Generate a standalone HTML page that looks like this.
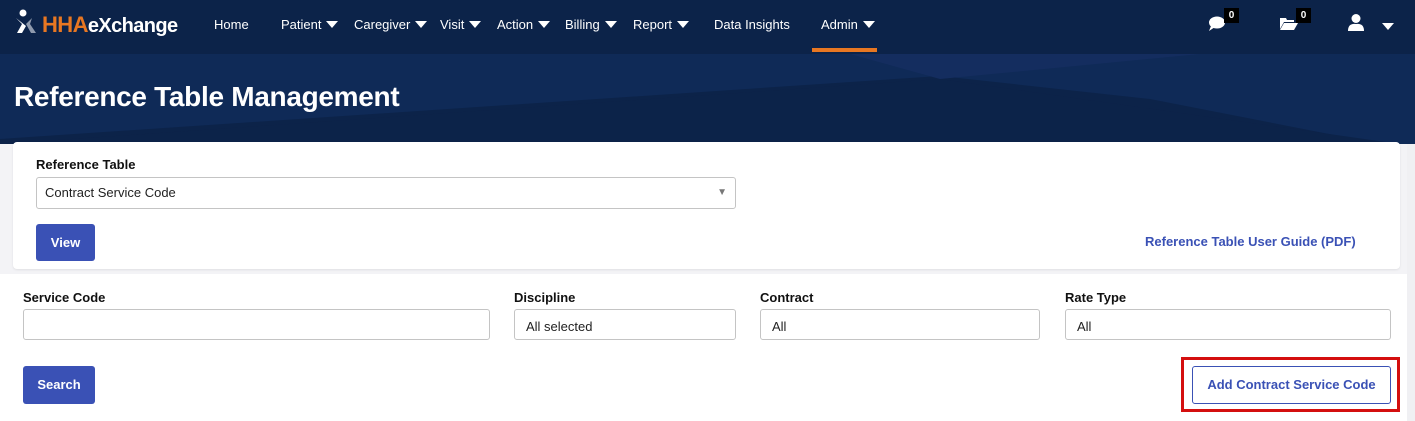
<!DOCTYPE html>
<html><head><meta charset="utf-8"><style>
*{margin:0;padding:0;box-sizing:border-box}
body{width:1415px;height:421px;overflow:hidden;font-family:"Liberation Sans",Arial,sans-serif;background:#fff;position:relative}
.nav{position:absolute;left:0;top:0;width:1415px;height:54px;background:#0c2349}
.hdr{position:absolute;left:0;top:54px;width:1415px;height:90px;background:#0c2349;overflow:hidden}
.a{position:absolute;color:#fff;font-size:13px;top:17px;white-space:nowrap}
.car{display:inline-block;width:0;height:0;border-left:6px solid transparent;border-right:6px solid transparent;border-top:7px solid #fff;margin-left:5px;vertical-align:1px}
.lbl{position:absolute;font-size:13px;font-weight:bold;color:#111}
.inp{position:absolute;border:1px solid #c4c4c4;border-radius:3px;background:#fff;font-size:13px;color:#222;padding-left:11px;line-height:33px}
.btn{position:absolute;background:#3a51b5;color:#fff;font-weight:bold;font-size:13px;border-radius:3px;text-align:center}
.badge{position:absolute;background:#000;color:#fff;font-size:10px;font-weight:bold;width:15px;height:15px;text-align:center;line-height:15px;top:8px}
</style></head><body>
<div class="nav"></div>
<div class="hdr">
<svg width="1415" height="90" style="position:absolute;left:0;top:0">
<polygon points="0,0 1415,0 1415,90 1380,90 1150,45 940,22 0,85" fill="#0f2a57"/>
<polygon points="850,0 1200,0 940,25" fill="#142d5f"/>
<polygon points="0,90 940,25 1400,90" fill="#0c2349"/>
</svg>
<div style="position:absolute;left:14px;top:27px;color:#fff;font-size:28px;font-weight:bold;letter-spacing:-0.3px">Reference Table Management</div>
</div>
<svg style="position:absolute;left:14px;top:9px" width="24" height="26" viewBox="0 0 24 26">
<circle cx="9" cy="4" r="3.5" fill="#fff"/>
<path d="M2 9 L8 15 L3 24 L8 24 L12 17 Z" fill="#fff"/>
<path d="M18 9 L12 15 L17 24 L22 24 L16 15 Z" fill="#8f9aad"/>
</svg>
<div style="position:absolute;left:42px;top:12px;font-size:22px;font-weight:bold;letter-spacing:-0.6px"><span style="color:#e87722">HHA</span><span style="color:#fff;font-size:20px">eXchange</span></div>
<div class="a" style="left:214px">Home</div>
<div class="a" style="left:281px">Patient<span class="car"></span></div>
<div class="a" style="left:354px">Caregiver<span class="car"></span></div>
<div class="a" style="left:440px">Visit<span class="car"></span></div>
<div class="a" style="left:497px">Action<span class="car"></span></div>
<div class="a" style="left:565px">Billing<span class="car"></span></div>
<div class="a" style="left:633px">Report<span class="car"></span></div>
<div class="a" style="left:714px">Data Insights</div>
<div class="a" style="left:821px">Admin<span class="car"></span></div>
<div style="position:absolute;left:812px;top:48px;width:65px;height:4px;background:#e87722"></div>
<svg style="position:absolute;left:1208px;top:16px" width="18" height="15" viewBox="0 0 18 15"><ellipse cx="9" cy="6.5" rx="8" ry="6" fill="#fff"/><path d="M3 10 L1 15 L7 11 Z" fill="#fff"/></svg>
<div class="badge" style="left:1224px">0</div>
<svg style="position:absolute;left:1280px;top:17px" width="18" height="13" viewBox="0 0 18 13"><path d="M0 1 L6 1 L7 3 L14 3 L14 5 L4 5 L0 12 Z" fill="#fff"/><path d="M4 6 L18 6 L14 13 L0 13 Z" fill="#fff"/></svg>
<div class="badge" style="left:1296px">0</div>
<svg style="position:absolute;left:1348px;top:14px" width="16" height="17" viewBox="0 0 16 17"><circle cx="8" cy="4.5" r="4.5" fill="#fff"/><path d="M0 17 Q0 9 8 10 Q16 9 16 17 Z" fill="#fff"/></svg>
<div style="position:absolute;left:1382px;top:23px;width:0;height:0;border-left:6px solid transparent;border-right:6px solid transparent;border-top:7px solid #fff"></div>
<div style="position:absolute;left:0;top:144px;width:1407px;height:130px;background:#f3f3f6"></div>
<div style="position:absolute;left:1407px;top:144px;width:8px;height:277px;background:#f0f0f3"></div>
<div style="position:absolute;left:13px;top:142px;width:1387px;height:127px;background:#fff;border-radius:4px;box-shadow:0 1px 2px rgba(0,0,0,.08)"></div>
<div class="lbl" style="left:36px;top:157px">Reference Table</div>
<div class="inp" style="left:36px;top:177px;width:700px;height:32px;line-height:30px;padding-left:8px">Contract Service Code<span style="position:absolute;right:8px;top:0;color:#777;font-size:10px">▼</span></div>
<div class="btn" style="left:36px;top:224px;width:59px;height:37px;line-height:37px">View</div>
<div style="position:absolute;left:1145px;top:234px;color:#3a51b5;font-weight:bold;font-size:13px">Reference Table User Guide (PDF)</div>
<div class="lbl" style="left:23px;top:290px">Service Code</div>
<div class="inp" style="left:23px;top:309px;width:467px;height:31px"></div>
<div class="lbl" style="left:514px;top:290px">Discipline</div>
<div class="inp" style="left:514px;top:309px;width:222px;height:31px">All selected</div>
<div class="lbl" style="left:760px;top:290px">Contract</div>
<div class="inp" style="left:760px;top:309px;width:280px;height:31px">All</div>
<div class="lbl" style="left:1065px;top:290px">Rate Type</div>
<div class="inp" style="left:1065px;top:309px;width:326px;height:31px">All</div>
<div class="btn" style="left:23px;top:366px;width:72px;height:38px;line-height:38px">Search</div>
<div style="position:absolute;left:1181px;top:357px;width:219px;height:55px;border:3px solid #d40f0f"></div>
<div style="position:absolute;left:1192px;top:366px;width:199px;height:38px;border:1px solid #3a51b5;border-radius:3px;color:#3a51b5;font-weight:bold;font-size:13px;text-align:center;line-height:36px">Add Contract Service Code</div>
</body></html>
